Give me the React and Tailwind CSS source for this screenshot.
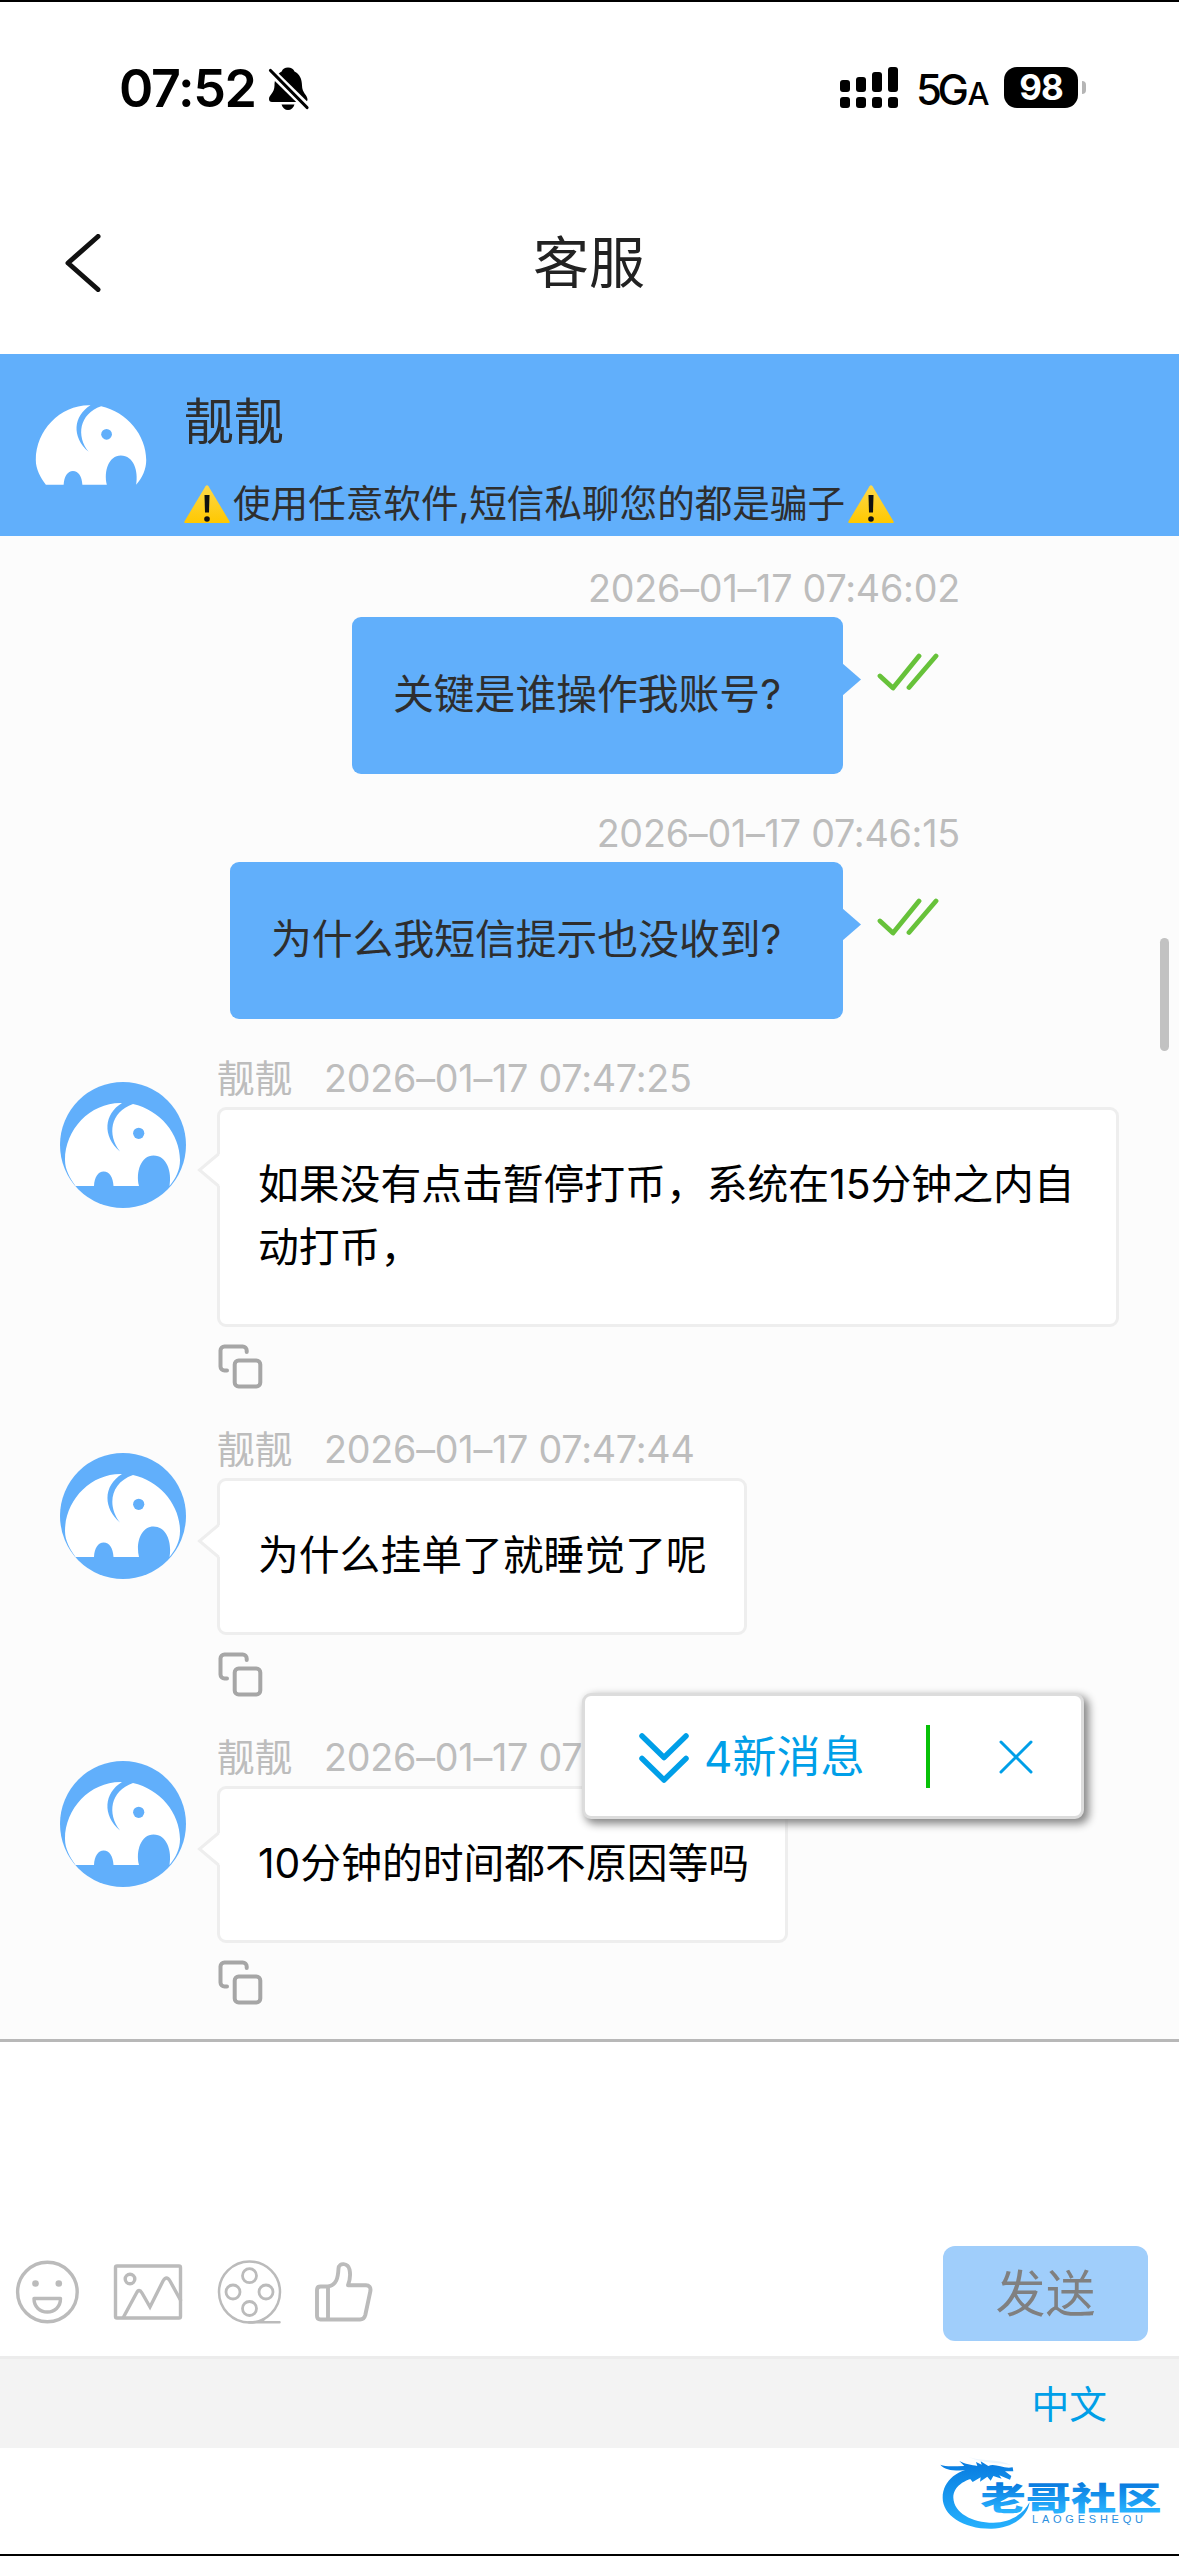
import clsx from 'clsx'

const MESSAGES = [
  { id: 1, mine: true, time: '2026–01–17 07:46:02', text: '关键是谁操作我账号?', width: 'w-[491px]' },
  { id: 2, mine: true, time: '2026–01–17 07:46:15', text: '为什么我短信提示也没收到?', width: 'w-[613px]' },
  { id: 3, mine: false, time: '2026–01–17 07:47:25', text: '如果没有点击暂停打币，系统在15分钟之内自动打币，', width: 'w-[902px]' },
  { id: 4, mine: false, time: '2026–01–17 07:47:44', text: '为什么挂单了就睡觉了呢', width: 'w-[530px]' },
  { id: 5, mine: false, time: '2026–01–17 07:48:03', text: '10分钟的时间都不原因等吗', width: 'w-[571px]' },
]

function Elephant({ className, round }) {
  return (
    <svg viewBox="0 0 126 126" className={clsx('shrink-0', className)}>
      {round && <circle cx="63" cy="63" r="63" fill="#61affb" />}
      <path
        d="M15.500 104C10 96 5 88 5 78C5 47 31 20 62 21C44 32 42 54 60 69.500C47 53 50 30 73 22C100 28 120 52 120 78C120 88 116 96 109.500 104C112 90 107 73.500 93.500 73.500C81 73.500 75.500 90 79 104H53.500C53 95 49.500 89.500 43.700 89.500C38 89.500 34.500 95 34 104Z"
        fill="#fff"
      />
      <circle cx="78.700" cy="51.300" r="5.600" fill="#61affb" />
    </svg>
  )
}

function Warning() {
  return (
    <svg viewBox="0 0 46 38" className="h-[38px] w-[46px] shrink-0">
      <defs>
        <linearGradient id="warn" x1="0" y1="0" x2="0" y2="1">
          <stop offset="0" stopColor="#fdd84a" />
          <stop offset="1" stopColor="#ffc800" />
        </linearGradient>
      </defs>
      <path d="M21.500 1.200Q23 -0.600 24.500 1.200L45.600 36.500Q46 38 45 38H1Q0 38 0.400 36.500Z" fill="url(#warn)" />
      <path d="M20.500 10H25.500L25 27.500H21Z" fill="#111" />
      <circle cx="23" cy="34" r="2.800" fill="#111" />
    </svg>
  )
}

function CopyIcon() {
  return (
    <svg viewBox="0 0 45 45" className="h-[45px] w-[45px]" fill="none" stroke="#a6a6a6" strokeWidth="4" strokeLinecap="round">
      <path d="M28.700 8V6.500a4 4 0 0 0-4-4H6.500a4 4 0 0 0-4 4V22.500a4 4 0 0 0 4 4H9" />
      <rect x="16.700" y="16.500" width="25.600" height="26" rx="4" />
    </svg>
  )
}

function StatusBar() {
  return (
    <div className="flex h-[177px] items-start border-t-2 border-black pl-[119px] pt-[62px] text-black">
      <span className="w-[149px] pt-px text-[52px] font-semibold leading-[48px] tracking-[-1.300px]">07:52</span>
      {/* 静音铃铛 */}
      <svg viewBox="0 0 42 44" className="mt-[2px] h-[44px] w-[42px]">
        <path d="M20 1.500C23 1.500 25.500 3 26.500 5.500C31.500 8 34 13 34 19.500C34 27 39.500 29 39.500 33.500Q39.500 36 36.500 36H4Q1 36 1 33C1 29 6.500 27 6.500 19.500C6.500 13 9 8 13.700 5.500C14.500 3 17 1.500 20 1.500Z" />
        <path d="M13.500 38.500H26.500C25.500 42 23 44 20 44C17 44 14.500 42 13.500 38.500Z" />
        <path d="M1.500 4L40 42" stroke="#fff" strokeWidth="8" />
        <path d="M2.500 4.500L39 41.500" stroke="#000" strokeWidth="3.200" strokeLinecap="round" />
      </svg>
      <svg viewBox="0 0 58 41" className="ml-[530px] mt-[3px] h-[41px] w-[58px]">
        <rect x="0" y="13" width="10" height="12" rx="3" />
        <rect x="16" y="10" width="10" height="15" rx="3" />
        <rect x="32" y="5" width="10" height="20" rx="3" />
        <rect x="48" y="0" width="10" height="25" rx="3" />
        <rect x="0" y="30" width="10" height="11" rx="3" />
        <rect x="16" y="30" width="10" height="11" rx="3" />
        <rect x="32" y="30" width="10" height="11" rx="3" />
        <rect x="48" y="30" width="10" height="11" rx="3" />
      </svg>
      <span className="ml-[18px] w-[88px] whitespace-nowrap pt-px text-[42px] font-medium leading-[50px] tracking-[-4.500px]">
        5G<span className="ml-[3px] text-[31px]">A</span>
      </span>
      <span className="mt-[3px] flex h-[41px] w-[74px] items-center justify-center rounded-[13px] bg-black text-[35px] font-bold leading-none tracking-[-1px] text-white">
        98
      </span>
      <span className="ml-[4px] mt-[17px] h-[13px] w-[4px] rounded-r-full bg-[#b5b5b5]" />
    </div>
  )
}

function NavBar() {
  return (
    <div className="flex h-[177px] items-center pb-[5px]">
      <svg viewBox="0 0 36 58" className="ml-[65px] h-[58px] w-[36px]" fill="none" stroke="#111" strokeWidth="5" strokeLinecap="round" strokeLinejoin="round">
        <path d="M33 2.500L3 29L33 55.500" />
      </svg>
      <h1 className="flex-1 pr-[102px] text-center text-[56px] leading-[60px] text-[#222]">客服</h1>
    </div>
  )
}

function AgentHeader() {
  return (
    <div className="flex h-[182px] bg-[#61affb] pl-[31px] pt-[31px] text-[#2e2e2e]">
      <Elephant className="h-[121px] w-[121px]" />
      <div className="ml-[32px]">
        <div className="pt-px text-[50px] leading-[72px]">靓靓</div>
        <div className="mt-[20px] flex items-center whitespace-nowrap text-[37.600px] leading-[50px]">
          <Warning />
          <span className="mx-[3px] pt-px">使用任意软件,短信私聊您的都是骗子</span>
          <Warning />
        </div>
      </div>
    </div>
  )
}

function MyMessage({ msg }) {
  return (
    <div className="mb-[27px] flex flex-col">
      <div className="h-[61px] pr-[219px] pt-[2px] text-right text-[37.700px] leading-[61px] tracking-[-0.240px] text-[#bdbdbd]">{msg.time}</div>
      <div className="flex justify-end pr-[240px]">
        <div className={clsx('relative h-[157px] whitespace-nowrap rounded-[9px] bg-[#61affb] pl-[41px] pt-[46px] text-[40.800px] leading-[63px] text-[#2e2e2e]', msg.width)}>
          {msg.text}
          <span className="absolute right-[-18px] top-[46px] h-[33px] w-[19px] bg-[#61affb] [clip-path:polygon(0_0,100%_50%,0_100%)]" />
        </div>
        <svg viewBox="0 0 62 38" className="ml-[34px] mt-[36px] h-[38px] w-[62px]" fill="none" stroke="#67c23a" strokeWidth="4.800" strokeLinecap="round" strokeLinejoin="round">
          <path d="M3 23L16 35L42 3" />
          <path d="M32 34.500L59 3" />
        </svg>
      </div>
    </div>
  )
}

function AgentMessage({ msg }) {
  return (
    <div className="mb-[28px] flex pl-[60px]">
      <Elephant round className="mt-[36px] h-[126px] w-[126px]" />
      <div className="ml-[31px]">
        <div className="flex h-[61px] whitespace-nowrap pt-[2px] text-[37.700px] leading-[61px] text-[#bdbdbd]">
          <span className="w-[107px]">靓靓</span>
          <span className="tracking-[-0.240px]">{msg.time}</span>
        </div>
        <div className={clsx('relative min-h-[157px] rounded-[9px] border-[3px] border-[#eee] bg-white pb-[45px] pl-[38px] pr-[30px] pt-[43px] text-[40.800px] leading-[63px] text-black', msg.width)}>
          {msg.text}
          <svg viewBox="0 0 24 36" className="absolute left-[-24px] top-[42px] h-[36px] w-[24px]">
            <path d="M24 2L3.500 18L24 34Z" fill="#fff" />
            <path d="M22.500 2L3.500 18L22.500 34" fill="none" stroke="#eee" strokeWidth="3" />
          </svg>
        </div>
        <div className="ml-px mt-[17px] h-[45px]">
          <CopyIcon />
        </div>
      </div>
    </div>
  )
}

function NewMessagePopup() {
  return (
    <div className="absolute left-[582px] top-[1157px] flex h-[126px] w-[502px] items-center rounded-[9px] border-[3px] border-[#dcdcdc] bg-white pl-[54px] text-[#009fe8] shadow-[4px_4px_9px_1px_#888]">
      <svg viewBox="0 0 50 50" className="mt-[4px] h-[50px] w-[50px]" fill="none" stroke="currentColor" strokeWidth="5.500" strokeLinecap="round" strokeLinejoin="round">
        <path d="M3 3L25 24.500L47 3" />
        <path d="M3 25.500L25 47L47 25.500" />
      </svg>
      <span className="ml-[15px] w-[222px] whitespace-nowrap pt-[2px] text-[44px] leading-[60px]">4新消息</span>
      <span className="h-[63px] w-[4px] bg-[#07c107]" />
      <svg viewBox="0 0 34 34" className="ml-[69px] mt-[2px] h-[34px] w-[34px]" fill="none" stroke="currentColor" strokeWidth="3" strokeLinecap="round">
        <path d="M2 2L32 32M32 2L2 32" />
      </svg>
    </div>
  )
}

function InputPanel() {
  return (
    <div className="flex h-[317px] items-end border-t-[3px] border-[#b8b8b8] bg-white">
      <div className="flex h-[110px] w-full">
        <svg viewBox="0 0 380 64" className="ml-[15px] mt-[14px] h-[64px] w-[380px]" fill="none" stroke="#bbb" strokeWidth="3.400">
          {/* 表情 */}
          <circle cx="32.400" cy="32" r="29.800" />
          <circle cx="20.500" cy="23.500" r="3.300" fill="#bbb" stroke="none" />
          <circle cx="43.800" cy="23.500" r="3.300" fill="#bbb" stroke="none" />
          <path d="M19 38.500H45.500C45.500 47 39.500 52 32.300 52C25 52 19 47 19 38.500Z" strokeLinejoin="round" />
          {/* 图片 */}
          <rect x="100.500" y="6" width="65" height="52" rx="1.500" />
          <circle cx="115" cy="19" r="4.800" />
          <path d="M108 58L121.500 33Q124 28 127 33L135 47L148 21Q151.500 15 155 21L166 41" />
          {/* 视频 */}
          <circle cx="234.500" cy="32" r="30.500" strokeWidth="2.500" />
          <g strokeWidth="2.800">
            <circle cx="234.500" cy="15.700" r="7" />
            <circle cx="218" cy="32" r="7" />
            <circle cx="251" cy="32" r="7" />
            <circle cx="234.500" cy="48.500" r="7" />
          </g>
          <path d="M234 62.300H264.500M249 59L246 62" strokeWidth="2.500" strokeLinecap="round" />
          {/* 点赞 */}
          <g strokeWidth="3.900" strokeLinejoin="round" strokeLinecap="round">
            <path d="M313 26.500H305.500Q302 26.500 302 30V56Q302 59.500 305.500 59.500H345C348 59.500 349.500 58 350.300 55L355.400 31C356 27.500 354 25.200 351 25.200H333C335 20 335.500 14 334.500 9.500C333 3 324 2 323.500 8.500C323 18 321.500 25 313 26.500Z" />
            <path d="M313 27V59" />
          </g>
        </svg>
        <button className="ml-auto mr-[31px] h-[95px] w-[205px] rounded-[12px] bg-[#a0cefb] pt-px text-[50px] leading-[94px] text-[#808080]">发送</button>
      </div>
    </div>
  )
}

function SiteLogo() {
  return (
    <svg viewBox="0 2 249 106" className="h-[106px] w-[249px]">
      <defs>
        <linearGradient id="ring" gradientUnits="userSpaceOnUse" x1="0" y1="60" x2="0" y2="245">
          <stop offset="0" stopColor="#0a7fe2" />
          <stop offset="1" stopColor="#25b0fd" />
        </linearGradient>
        <linearGradient id="brand" gradientUnits="userSpaceOnUse" x1="0" y1="-28" x2="0" y2="1">
          <stop offset="0" stopColor="#0878dd" />
          <stop offset="1" stopColor="#27b1fe" />
        </linearGradient>
      </defs>
      <g transform="scale(0.3333)" fill="url(#ring)">
        <path d="M150 62C85 68 38 102 38 155C38 208 100 249 185 248C245 246 292 215 299 168C280 205 240 230 190 230C125 230 72 200 70 155C70 122 100 100 150 92Z" />
        <path d="M31 56C50 64 75 60 103 60L88 45C105 55 125 56 142 60L138 48L155 56L152 46L175 60C195 50 220 70 248 64L250 76L225 76L244 90L240 101L208 88L215 98L190 90L182 104L172 92L150 107L152 94L128 108L120 98L95 88L120 72C80 75 45 75 31 56Z" />
        <path d="M115 32C150 48 200 35 245 58C215 48 160 55 115 32Z" opacity="0.080" />
      </g>
      <text transform="translate(50.500 64) scale(1.415 1)" fontSize="32" fontWeight="900" fill="url(#brand)" className="font-['Noto_Sans_CJK_SC',sans-serif]">老哥社区</text>
      <text x="102" y="77" fontSize="11" textLength="111" fill="#2a8fe0" className="font-['Liberation_Sans',sans-serif]">LAOGESHEQU</text>
    </svg>
  )
}

export default function App() {
  return (
    <div className="flex h-[2556px] w-[1179px] flex-col overflow-hidden bg-white font-[Inter,'Noto_Sans_CJK_SC',sans-serif]">
      <StatusBar />
      <NavBar />
      <AgentHeader />

      {/* 聊天记录 */}
      <div className="relative h-[1503px] overflow-hidden bg-[#fcfcfc] pt-[20px]">
        {MESSAGES.map((msg) => (msg.mine ? <MyMessage key={msg.id} msg={msg} /> : <AgentMessage key={msg.id} msg={msg} />))}
        <span className="absolute right-[10px] top-[402px] h-[113px] w-[9px] rounded-full bg-[#c2c2c2]" />
        <NewMessagePopup />
      </div>

      <InputPanel />

      <div className="h-[92px] border-t-[3px] border-[#ececec] bg-[#f3f3f3] pr-[72px] text-right text-[37.700px] leading-[90px] text-[#009fe8]">中文</div>

      <div className="flex h-[108px] justify-end border-b-2 border-black">
        <SiteLogo />
      </div>
    </div>
  )
}
